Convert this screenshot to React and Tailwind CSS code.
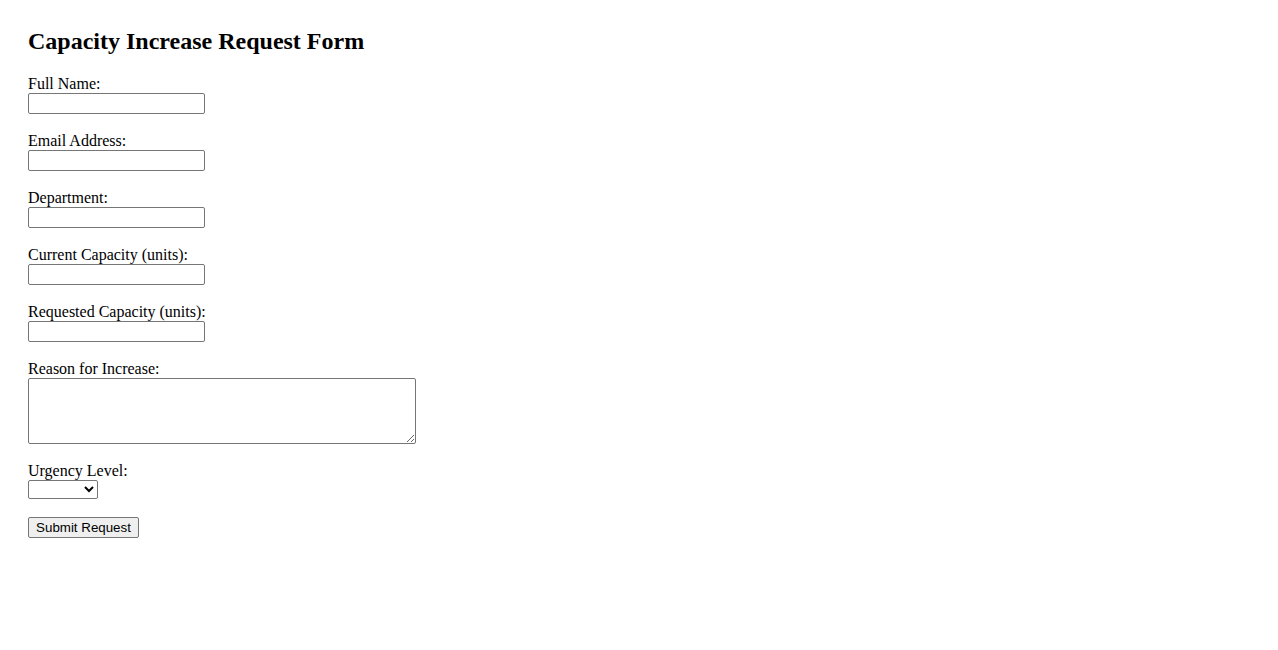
import React from "react";

const fields = [
  { id: "fullName", label: "Full Name:" },
  { id: "email", label: "Email Address:" },
  { id: "department", label: "Department:" },
  { id: "currentCapacity", label: "Current Capacity (units):" },
  { id: "requestedCapacity", label: "Requested Capacity (units):" },
];

function App() {
  return (
    <div className="min-h-[650px] bg-white px-[28px] pt-[27px] text-black font-['Liberation_Serif','Times_New_Roman',serif] text-[16px]">
      <h2 className="text-[24px] font-bold leading-[28px] mb-[20px]">
        Capacity Increase Request Form
      </h2>
      <form onSubmit={(e) => e.preventDefault()}>
        {fields.map((field) => (
          <div key={field.id} className="mb-[18px]">
            <label htmlFor={field.id} className="block leading-[18px] h-[18px]">
              {field.label}
            </label>
            <input
              id={field.id}
              type="text"
              className="block w-[177px] h-[21px] border border-[#767676] rounded-[2px] bg-white px-[2px] text-[13.333px] font-['Liberation_Sans',Arial,sans-serif]"
            />
          </div>
        ))}
        <div className="mb-[18px]">
          <label htmlFor="reason" className="block leading-[18px] h-[18px]">
            Reason for Increase:
          </label>
          <textarea
            id="reason"
            className="block w-[388px] h-[66px] border border-[#767676] rounded-[2px] bg-white p-[2px] text-[13.333px] font-['Liberation_Mono',monospace] resize"
          ></textarea>
        </div>
        <div className="mb-[18px]">
          <label htmlFor="urgency" className="block leading-[18px] h-[18px]">
            Urgency Level:
          </label>
          <select
            id="urgency"
            defaultValue=""
            className="block w-[70px] h-[19px] border border-[#767676] rounded-[2px] bg-white text-[13.333px] font-['Liberation_Sans',Arial,sans-serif]"
          >
            <option value=""></option>
            <option value="low">Low</option>
            <option value="medium">Medium</option>
            <option value="high">High</option>
          </select>
        </div>
        <button
          type="submit"
          className="block w-[111px] h-[21px] border border-[#767676] rounded-[2px] bg-[#efefef] text-[13.333px] leading-[19px] text-black font-['Liberation_Sans',Arial,sans-serif]"
        >
          Submit Request
        </button>
      </form>
    </div>
  );
}

export default App;
